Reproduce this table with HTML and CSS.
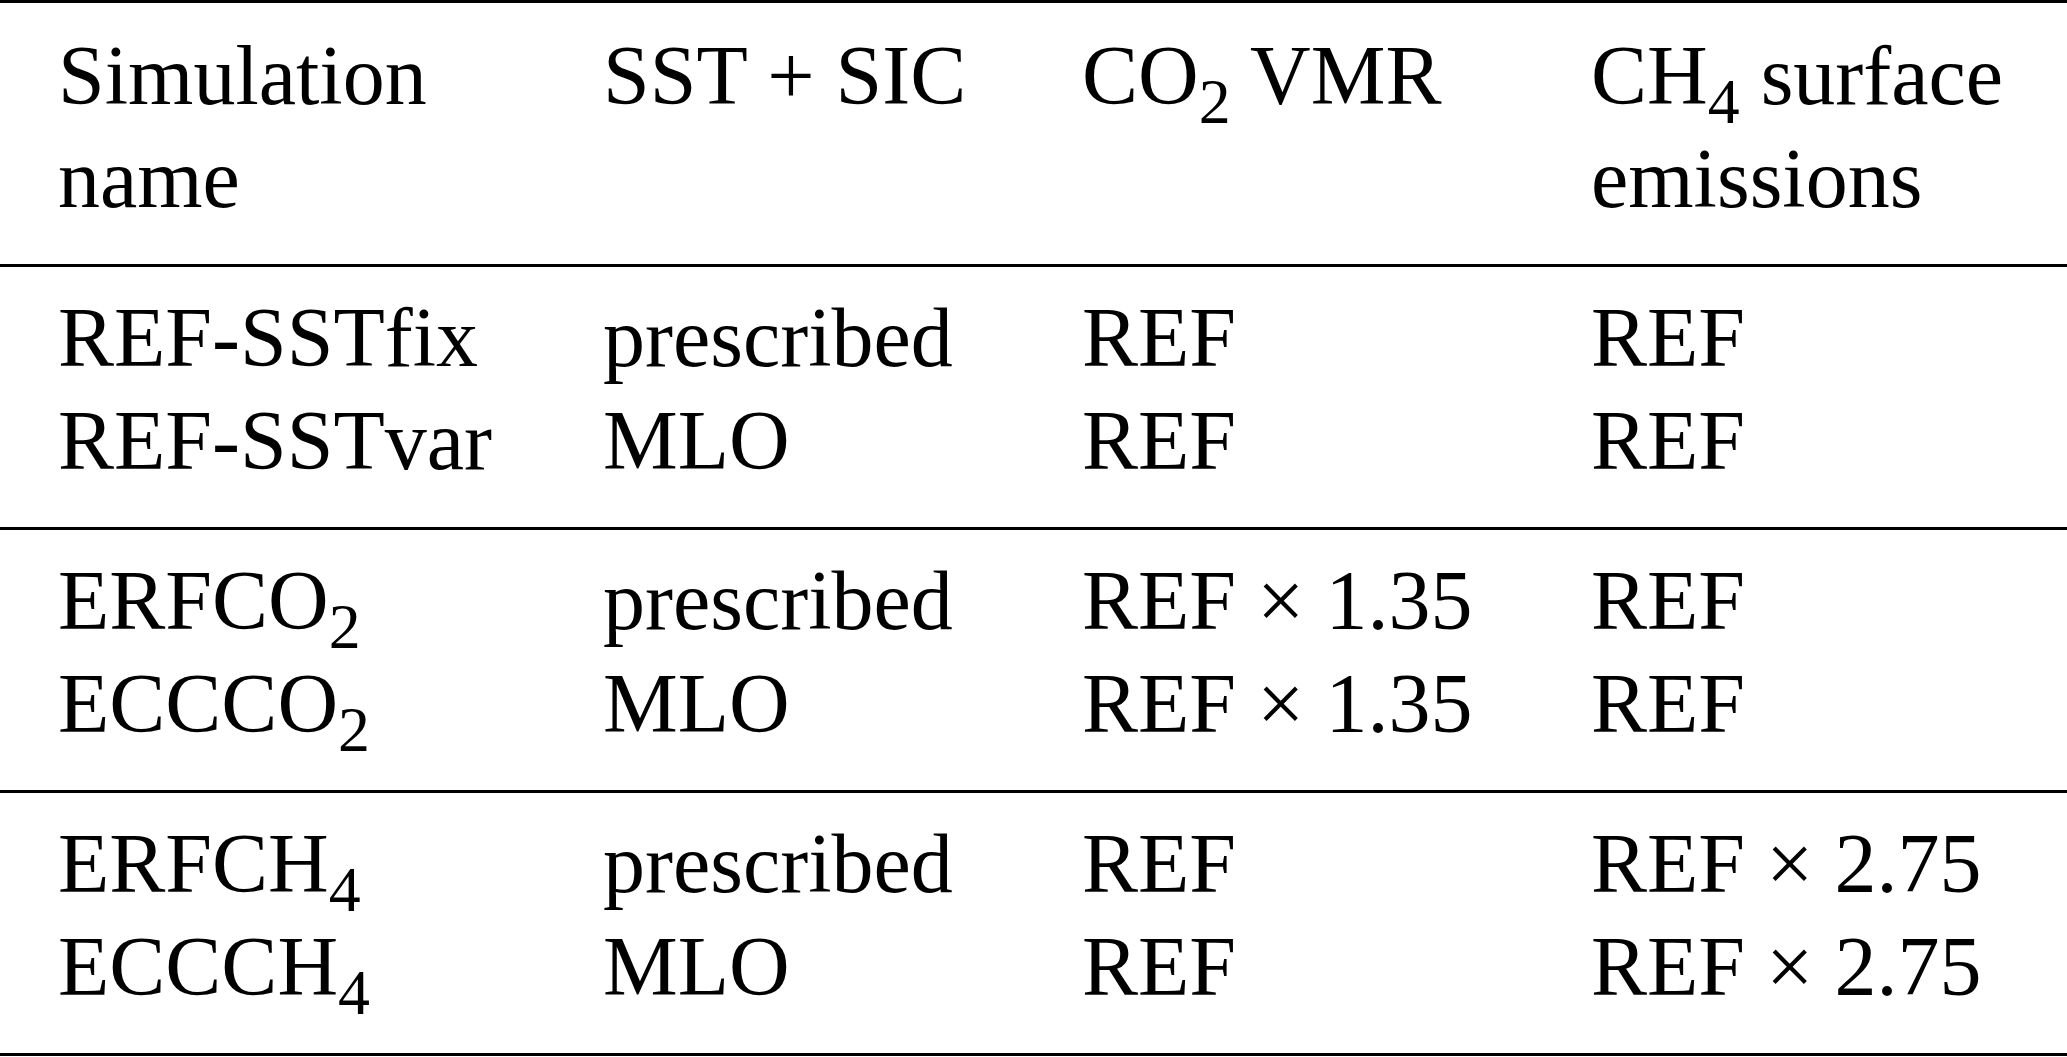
FILE: index.html
```html
<!DOCTYPE html>
<html lang="en">
<head>
    <meta charset="UTF-8">
    <meta name="viewport" content="width=device-width, initial-scale=1.0">
    <title>Simulations</title>
    <link rel="stylesheet" href="styles.css">
</head>
<body>
    <table class="sim-table">
        <colgroup>
            <col class="col-name">
            <col class="col-sst">
            <col class="col-co2">
            <col class="col-ch4">
        </colgroup>
        <thead>
            <tr>
                <th>Simulation<br>name</th>
                <th>SST + SIC</th>
                <th>CO<span class="sub">2</span> VMR</th>
                <th>CH<span class="sub">4</span> surface<br>emissions</th>
            </tr>
        </thead>
        <tbody>
            <tr>
                <td>REF-SSTfix</td>
                <td>prescribed</td>
                <td>REF</td>
                <td>REF</td>
            </tr>
            <tr>
                <td>REF-SSTvar</td>
                <td>MLO</td>
                <td>REF</td>
                <td>REF</td>
            </tr>
        </tbody>
        <tbody>
            <tr>
                <td>ERFCO<span class="sub">2</span></td>
                <td>prescribed</td>
                <td>REF × 1.35</td>
                <td>REF</td>
            </tr>
            <tr>
                <td>ECCCO<span class="sub">2</span></td>
                <td>MLO</td>
                <td>REF × 1.35</td>
                <td>REF</td>
            </tr>
        </tbody>
        <tbody>
            <tr>
                <td>ERFCH<span class="sub">4</span></td>
                <td>prescribed</td>
                <td>REF</td>
                <td>REF × 2.75</td>
            </tr>
            <tr>
                <td>ECCCH<span class="sub">4</span></td>
                <td>MLO</td>
                <td>REF</td>
                <td>REF × 2.75</td>
            </tr>
        </tbody>
    </table>
</body>
</html>
```

FILE: styles.css
```css
body {
    margin: 0;
    background-color: #ffffff;
    color: #000000;
    font-family: 'Liberation Serif', 'Times New Roman', serif;
}

.sim-table {
    width: 2067px;
    table-layout: fixed;
    border-collapse: separate;
    border-spacing: 0;
    border-top: 3px solid #000;
    font-size: 84px;
    line-height: 103px;
}

.col-name { width: 603px; }
.col-sst { width: 479px; }
.col-co2 { width: 509px; }
.col-ch4 { width: 476px; }

.sim-table th,
.sim-table td {
    padding: 0;
    text-align: left;
    vertical-align: top;
    font-weight: normal;
    white-space: nowrap;
}

.sim-table th:first-child,
.sim-table td:first-child {
    padding-left: 58px;
}

.sim-table thead th {
    padding-top: 21px;
    padding-bottom: 34px;
    border-bottom: 3px solid #000;
}

.sim-table tbody tr:first-child td {
    padding-top: 19px;
}

.sim-table tbody tr:last-child td {
    padding-bottom: 35px;
    border-bottom: 3px solid #000;
}

.sub {
    font-size: 0.76em;
    line-height: 0;
    vertical-align: -0.3em;
}
```
